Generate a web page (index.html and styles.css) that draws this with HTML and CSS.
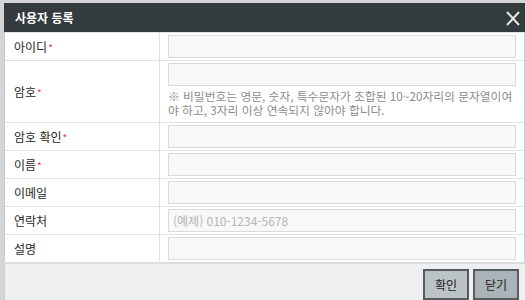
FILE: index.html
```html
<!DOCTYPE html>
<html lang="ko">
<head>
    <meta charset="UTF-8">
    <meta name="viewport" content="width=device-width, initial-scale=1.0">
    <title>사용자 등록</title>
    <link rel="stylesheet" href="styles.css">
</head>
<body>
    <div class="dialog">
        <header class="dialog-header">
            <h2>사용자 등록</h2>
            <button class="close-btn" aria-label="닫기">
                <svg width="14" height="15" viewBox="0 0 14 15">
                    <path d="M1 1 L13 14 M13 1 L1 14" stroke="#e4e6e7" stroke-width="2" fill="none"/>
                </svg>
            </button>
        </header>

        <div class="form">
            <div class="form-row">
                <label class="form-label">아이디<span class="req">*</span></label>
                <div class="form-field"><input type="text"></div>
            </div>
            <div class="form-row">
                <label class="form-label">암호<span class="req">*</span></label>
                <div class="form-field">
                    <input type="password">
                    <p class="help">※ 비밀번호는 영문, 숫자, 특수문자가 조합된 10~20자리의 문자열이여야 하고, 3자리 이상 연속되지 않아야 합니다.</p>
                </div>
            </div>
            <div class="form-row">
                <label class="form-label">암호 확인<span class="req">*</span></label>
                <div class="form-field"><input type="password"></div>
            </div>
            <div class="form-row">
                <label class="form-label">이름<span class="req">*</span></label>
                <div class="form-field"><input type="text"></div>
            </div>
            <div class="form-row">
                <label class="form-label">이메일</label>
                <div class="form-field"><input type="text"></div>
            </div>
            <div class="form-row">
                <label class="form-label">연락처</label>
                <div class="form-field"><input type="text" placeholder="(예제) 010-1234-5678"></div>
            </div>
            <div class="form-row">
                <label class="form-label">설명</label>
                <div class="form-field"><input type="text"></div>
            </div>
        </div>

        <footer class="dialog-footer">
            <button class="btn">확인</button>
            <button class="btn btn-close">닫기</button>
        </footer>
    </div>
</body>
</html>
```

FILE: styles.css
```css
body {
    margin: 0;
    width: 526px;
    height: 300px;
    overflow: hidden;
    background: #d4d5d6;
    font-family: "Noto Sans CJK KR", "Noto Sans", sans-serif;
    font-size: 12px;
    color: #222;
}

.dialog {
    margin: 3px 0 0 4px;
    width: 521px;
    background: #fff;
}

.dialog-header {
    height: 29px;
    background: #343b3f;
    display: flex;
    align-items: center;
    justify-content: space-between;
    padding: 0 5px 0 11px;
    box-sizing: border-box;
}
.dialog-header h2 {
    margin: 0;
    font-size: 12px;
    font-weight: bold;
    color: #fff;
}
.close-btn {
    border: none;
    background: none;
    padding: 0;
    margin-top: 1px;
    display: flex;
    cursor: pointer;
}

.form {
    border-left: 1px solid #c9cdd0;
    border-right: 1px solid #c9cdd0;
}
.form-row {
    display: grid;
    grid-template-columns: 155px 1fr;
    border-top: 1px solid #e1e2e5;
}
.form-label {
    display: flex;
    align-items: center;
    padding-left: 9px;
    border-right: 1px solid #e1e2e5;
    color: #1e1e1e;
}
.req {
    color: #e8336a;
    font-size: 10px;
    margin-left: 1px;
    position: relative;
    top: 1px;
}
.form-field {
    padding: 2px 8px 2px 8px;
    min-height: 23px;
}
.form-field input {
    display: block;
    width: 100%;
    height: 23px;
    box-sizing: border-box;
    border: 1px solid #dadada;
    background: #f8f8f8;
    padding: 0 4px;
    font-family: inherit;
    font-size: 12px;
    color: #333;
}
.form-field input::placeholder {
    color: #b5b5b5;
}
.help {
    margin: 3px 0 3px 0;
    font-size: 11.75px;
    line-height: 14px;
    color: #8c8c8c;
}

.dialog-footer {
    border-top: 2px solid #dcdde1;
    background: #eff0f2;
    display: flex;
    justify-content: flex-end;
    gap: 4px;
    padding: 5px 6px 6px 0;
    border-left: 1px solid #c9cdd0;
}
.btn {
    width: 46px;
    height: 31px;
    border: 2px solid #555b5e;
    background: #bcc3c6;
    font-family: inherit;
    font-size: 12px;
    color: #222;
    padding: 0;
    cursor: pointer;
}
.btn-close {
    background: #aab3b7;
}
```
